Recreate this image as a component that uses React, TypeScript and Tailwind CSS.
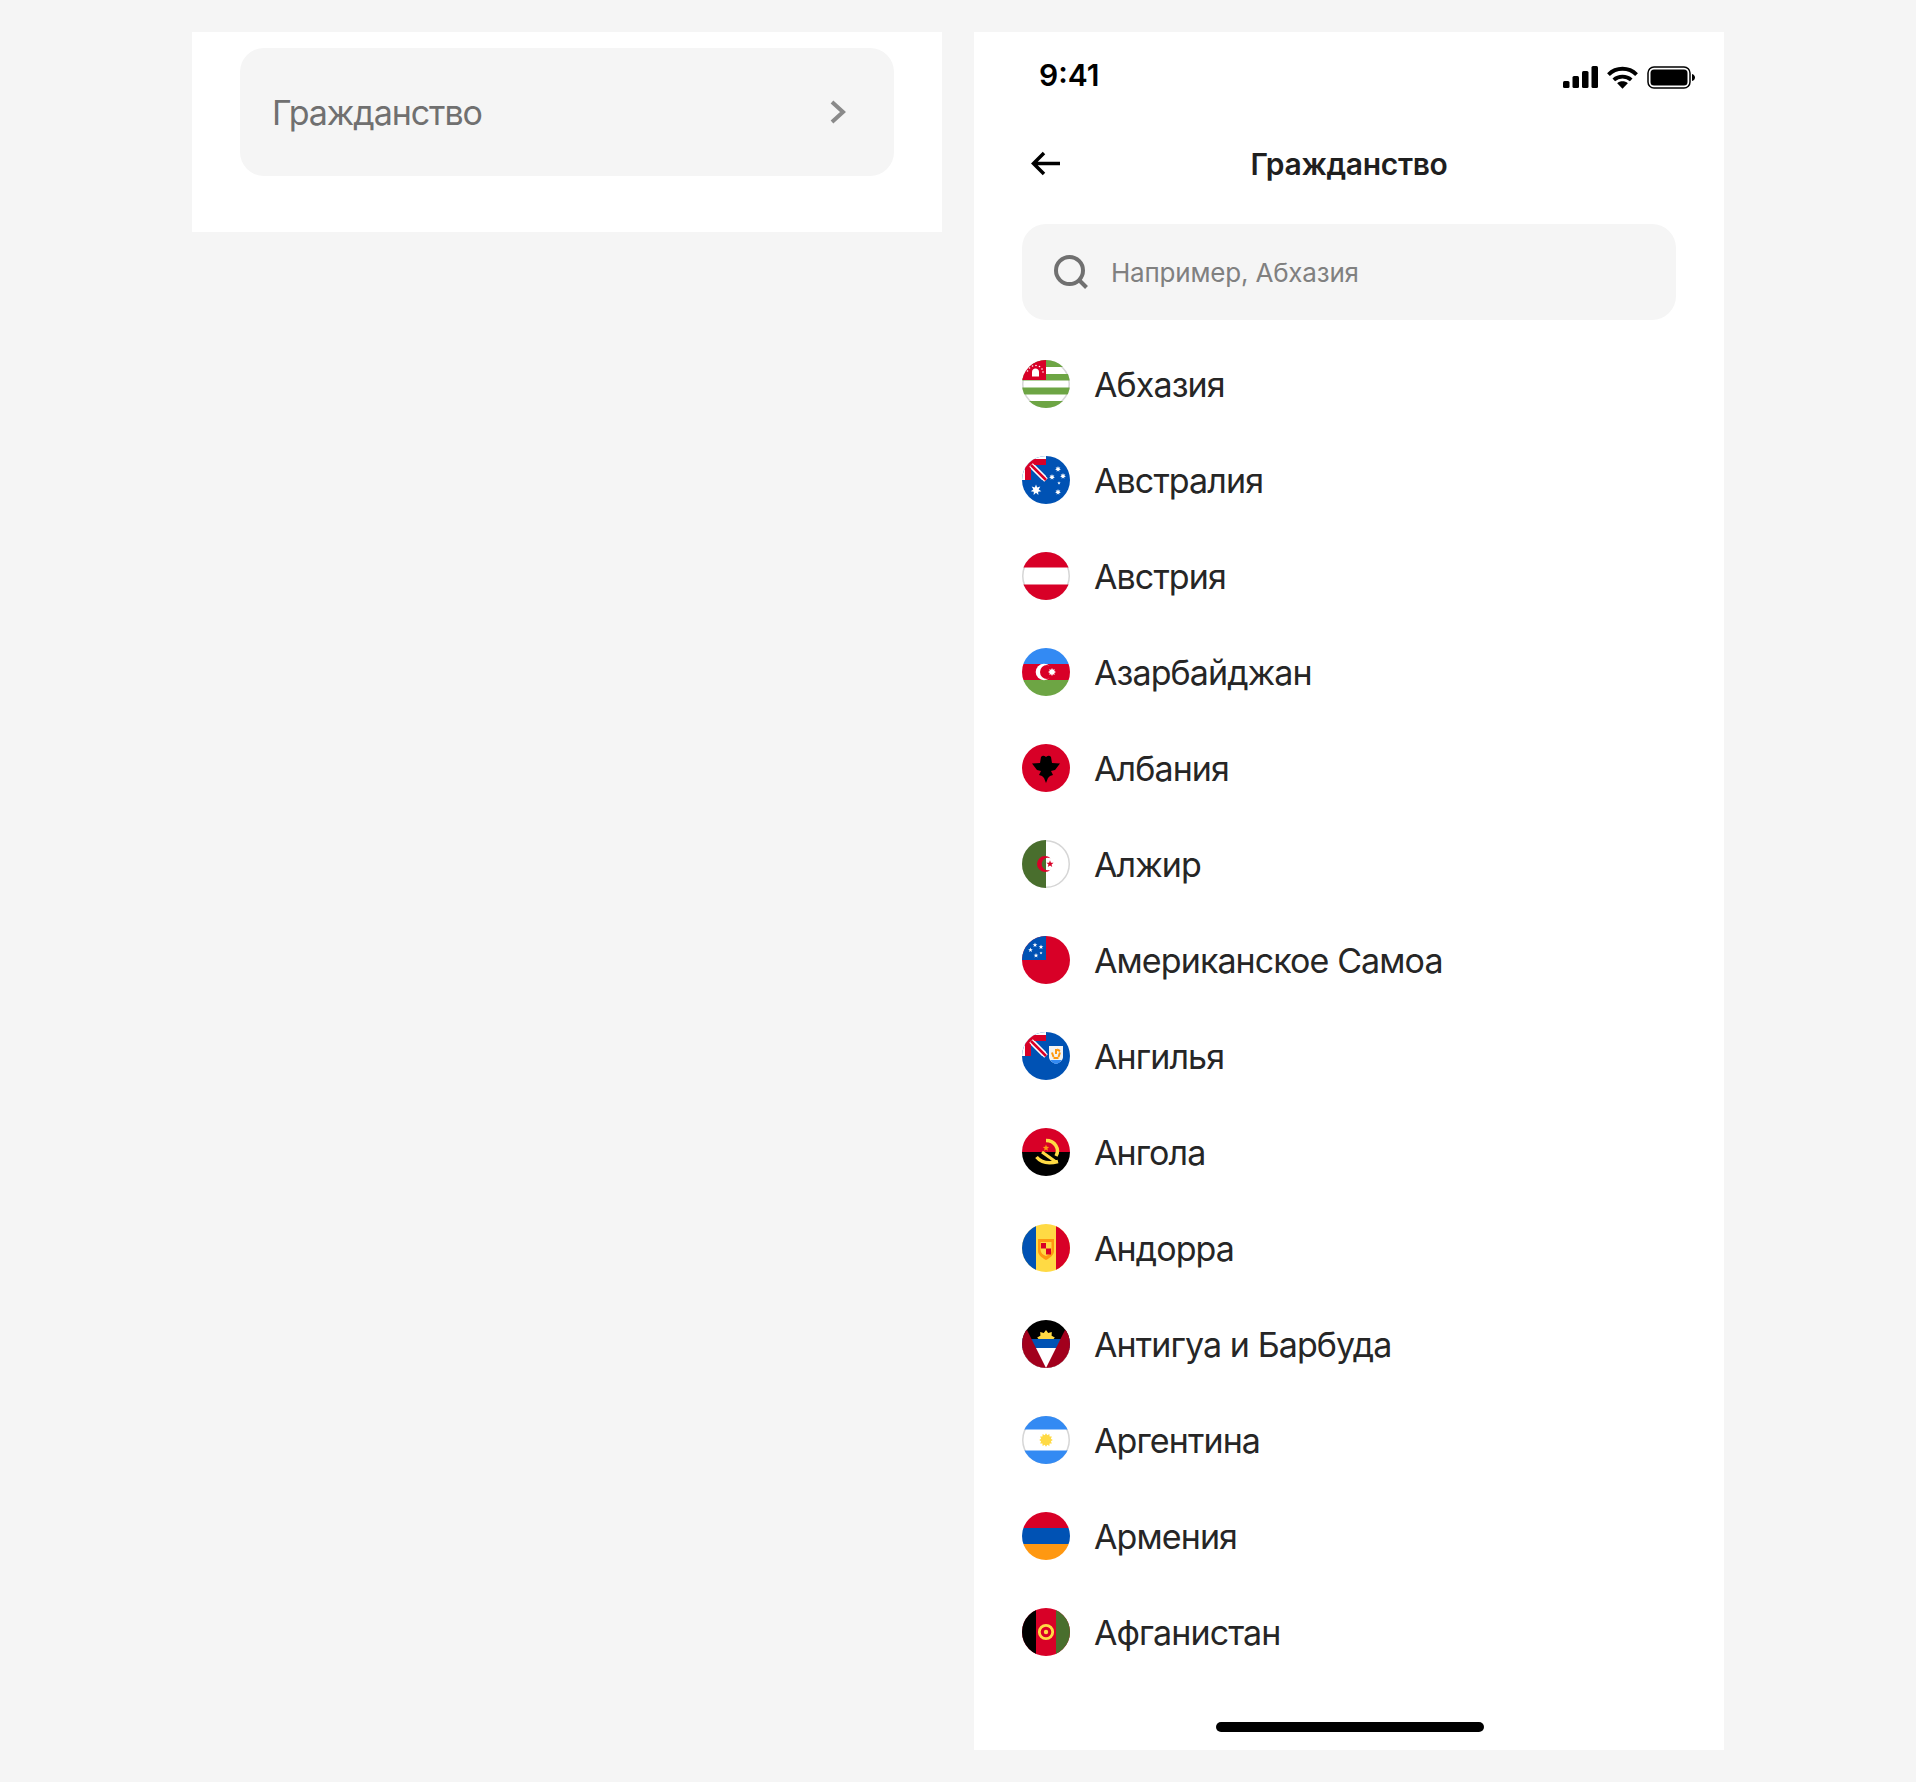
import React from "react";

const RED = "#d80027";
const GREEN = "#6da544";
const DARK_GREEN = "#496e2d";
const BLUE = "#0052b4";
const SKY = "#338af3";
const YELLOW = "#ffda44";
const ORANGE = "#ff9811";
const GREY = "#d6d6d6";

// круг с обрезкой, все флаги рисуются в координатах 0..48
const Flag = ({ id, children, light }: { id: string; children: React.ReactNode; light?: boolean }) => (
  <svg width="48" height="48" viewBox="0 0 48 48" className="shrink-0">
    <defs>
      <clipPath id={id}>
        <circle cx="24" cy="24" r="24" />
      </clipPath>
    </defs>
    {/* серая обводка видна только на белых частях флага */}
    {light && <circle cx="24" cy="24" r="23.25" fill="#fff" stroke={GREY} strokeWidth="1.5" />}
    <g clipPath={`url(#${id})`}>{children}</g>
  </svg>
);

const Star = ({ x, y, r, fill = "#fff", n = 5, inner = 0.42 }: { x: number; y: number; r: number; fill?: string; n?: number; inner?: number }) => {
  const pts: string[] = [];
  for (let i = 0; i < n * 2; i++) {
    const rad = i % 2 === 0 ? r : r * inner;
    const a = (Math.PI / n) * i - Math.PI / 2;
    pts.push(`${x + rad * Math.cos(a)},${y + rad * Math.sin(a)}`);
  }
  return <polygon points={pts.join(" ")} fill={fill} />;
};

const UnionCorner = () => (
  <>
    <rect width="48" height="48" fill={BLUE} />
    <rect width="24" height="24" fill="#fff" />
    <rect x="3" y="3" width="21" height="21" fill={RED} />
    <rect x="9" y="9" width="15" height="15" fill="#fff" />
    <path d="M9 13V24H20Z" fill={BLUE} />
    <path d="M13 9H24V20Z" fill={BLUE} />
    <path d="M9 9L24 24" stroke="#fff" strokeWidth="5" />
    <path d="M9 9L24 24" stroke={RED} strokeWidth="2.5" />
  </>
);

const flags: Record<string, React.ReactNode> = {
  abkhazia: (
    <Flag id="f-ab" light>
      <rect y="0" width="48" height="7" fill={GREEN} />
      <rect y="14" width="48" height="6.500" fill={GREEN} />
      <rect y="27.500" width="48" height="7" fill={GREEN} />
      <rect y="41" width="48" height="7" fill={GREEN} />
      <rect width="24" height="20" fill={RED} />
      <path d="M13.500 8.500c2 0 3.500 1.500 3.500 3.500v4.500h-7V12c0-2 1.500-3.500 3.500-3.500Z" fill="#fff" />
      <g fill="#fff">
        <circle cx="5.500" cy="11" r="0.800" />
        <circle cx="7.500" cy="8" r="0.800" />
        <circle cx="10.500" cy="6" r="0.800" />
        <circle cx="14" cy="5.500" r="0.800" />
        <circle cx="17.500" cy="6.500" r="0.800" />
        <circle cx="20" cy="9" r="0.800" />
        <circle cx="21" cy="12" r="0.800" />
      </g>
    </Flag>
  ),
  australia: (
    <Flag id="f-au">
      <UnionCorner />
      <Star x={14} y={34} r={5.500} n={7} inner={0.5} />
      <Star x={36} y={13} r={3} n={7} inner={0.5} />
      <Star x={30} y={21} r={3} n={7} inner={0.5} />
      <Star x={41} y={20} r={3} n={7} inner={0.5} />
      <Star x={37} y={27} r={1.800} />
      <Star x={36} y={36} r={3} n={7} inner={0.5} />
    </Flag>
  ),
  austria: (
    <Flag id="f-at" light>
      <rect width="48" height="15.500" fill={RED} />
      <rect y="32.500" width="48" height="15.500" fill={RED} />
    </Flag>
  ),
  azerbaijan: (
    <Flag id="f-az">
      <rect width="48" height="16" fill={SKY} />
      <rect y="16" width="48" height="16" fill={RED} />
      <rect y="32" width="48" height="16" fill={GREEN} />
      <circle cx="22" cy="24" r="8.300" fill="#fff" />
      <circle cx="25" cy="24" r="7" fill={RED} />
      <Star x={30} y={24} r={4} n={8} inner={0.6} />
    </Flag>
  ),
  albania: (
    <Flag id="f-al">
      <rect width="48" height="48" fill={RED} />
      <path d="M19 13Q21 10.500 24 13Q27 10.500 29 13L30 19L38 19.500L33 26L29 27L31 31L28 32L26 34L24 39L22 34L20 32L17 31L19 27L15 26L10 19.500L18 19Z" fill="#000" />
    </Flag>
  ),
  algeria: (
    <Flag id="f-dz" light>
      <rect width="24" height="48" fill={DARK_GREEN} />
      <path d="M28.550 18.240A8 8 0 1 0 28.550 29.760A6.300 6.300 0 1 1 28.550 18.240Z" fill={RED} />
      <Star x={28} y={24} r={3.800} fill={RED} />
    </Flag>
  ),
  samoa: (
    <Flag id="f-as">
      <rect width="48" height="48" fill={RED} />
      <path d="M0 0H24V24H0Z" fill={BLUE} />
      <Star x={13} y={9} r={2.500} />
      <Star x={19} y={11} r={2.500} />
      <Star x={8.500} y={14} r={2.500} />
      <Star x={19} y={17} r={1.600} />
      <Star x={14} y={19.500} r={2.500} />
    </Flag>
  ),
  anguilla: (
    <Flag id="f-ai">
      <UnionCorner />
      <path d="M27 14H41V25C41 28.500 37 31 34 32C31 31 27 28.500 27 25Z" fill="#f3f3f3" />
      <path d="M28.200 28H39.800C38 30.500 36 31.500 34 32C32 31.500 30 30.500 28.200 28Z" fill={SKY} />
      <g stroke={ORANGE} strokeWidth="2" fill="none">
        <path d="M34 17V22" />
        <path d="M30 20.500L31.500 25" />
        <path d="M38 20.500L36.500 25" />
        <path d="M31.500 26H36.500" />
        <path d="M35 17.500L38 19" />
      </g>
    </Flag>
  ),
  angola: (
    <Flag id="f-ao">
      <rect width="48" height="24" fill={RED} />
      <rect y="24" width="48" height="24" fill="#000" />
      <path d="M24 12.500C33 12.500 38 21 34 28" fill="none" stroke={YELLOW} strokeWidth="3.500" />
      <path d="M14.500 29C19 34.500 27 36 36 33.500" fill="none" stroke={YELLOW} strokeWidth="3.500" />
      <path d="M20 24L34 34" stroke={YELLOW} strokeWidth="3" />
      <Star x={24} y={20} r={3.400} fill={ORANGE} />
    </Flag>
  ),
  andorra: (
    <Flag id="f-ad">
      <rect width="48" height="48" fill={YELLOW} />
      <rect width="14" height="48" fill={BLUE} />
      <rect x="34" width="14" height="48" fill={RED} />
      <path d="M16 15H32V27C32 31 28 34 24 36C20 34 16 31 16 27Z" fill={ORANGE} />
      <path d="M18.500 18H29.500V26C29.500 29 27 31 24 32C21 31 18.500 29 18.500 26Z" fill={YELLOW} />
      <rect x="19" y="19" width="5" height="5.500" fill={RED} />
      <rect x="24" y="24.500" width="5" height="6" fill={RED} />
    </Flag>
  ),
  antigua: (
    <Flag id="f-ag">
      <rect width="48" height="48" fill="#000" />
      <Star x={24} y={19} r={9} n={9} inner={0.72} fill={YELLOW} />
      <rect y="19" width="48" height="29" fill="#fff" />
      <rect y="19" width="48" height="9" fill={BLUE} />
      <path d="M0 0L24 48H0Z" fill="#a2001d" />
      <path d="M48 0L24 48H48Z" fill="#a2001d" />
    </Flag>
  ),
  argentina: (
    <Flag id="f-ar" light>
      <rect width="48" height="13.500" fill={SKY} />
      <rect y="34.500" width="48" height="13.500" fill={SKY} />
      <Star x={24} y={24} r={6.800} n={12} inner={0.74} fill={YELLOW} />
    </Flag>
  ),
  armenia: (
    <Flag id="f-am">
      <rect width="48" height="16" fill={RED} />
      <rect y="16" width="48" height="16" fill={BLUE} />
      <rect y="32" width="48" height="16" fill={ORANGE} />
    </Flag>
  ),
  afghanistan: (
    <Flag id="f-af">
      <rect width="48" height="48" fill={RED} />
      <rect width="14" height="48" fill="#000" />
      <rect x="34" width="14" height="48" fill={DARK_GREEN} />
      <circle cx="24" cy="24" r="6.700" fill="none" stroke={YELLOW} strokeWidth="2.800" />
      <circle cx="24" cy="24" r="2.200" fill={YELLOW} />
    </Flag>
  ),
};

const countries: [string, string][] = [
  ["abkhazia", "Абхазия"],
  ["australia", "Австралия"],
  ["austria", "Австрия"],
  ["azerbaijan", "Азарбайджан"],
  ["albania", "Албания"],
  ["algeria", "Алжир"],
  ["samoa", "Американское Самоа"],
  ["anguilla", "Ангилья"],
  ["angola", "Ангола"],
  ["andorra", "Андорра"],
  ["antigua", "Антигуа и Барбуда"],
  ["argentina", "Аргентина"],
  ["armenia", "Армения"],
  ["afghanistan", "Афганистан"],
];

const App = () => {
  return (
    <div className="flex min-h-[1782px] items-start justify-center gap-8 bg-[#f5f5f5] pt-8 font-['Inter','Noto_Sans',sans-serif]">
      {/* закрытое поле */}
      <div className="h-[200px] w-[750px] bg-white px-12 pt-4">
        <div className="flex h-32 items-center justify-between rounded-3xl bg-[#f5f5f5] pl-8 pr-12">
          <span className="text-[34px] tracking-[-1.05px] text-[#707070]">Гражданство</span>
          <svg width="17" height="24" viewBox="0 0 17 24" fill="none">
            <path d="M3 2L14 12L3 22" stroke="#8a8a8a" strokeWidth="4" />
          </svg>
        </div>
      </div>

      {/* экран выбора */}
      <div className="flex h-[1718px] w-[750px] flex-col bg-white">
        <div className="flex h-[86px] shrink-0 items-center justify-between pl-[65px] pr-[29px]">
          <span className="text-[30px] font-semibold text-black">9:41</span>
          <div className="flex items-center gap-[9px] pt-1">
            <svg width="35" height="22" viewBox="0 0 35 22" fill="#000">
              <rect x="0" y="15" width="6.500" height="7" rx="1.500" />
              <rect x="9.500" y="10" width="6.500" height="12" rx="1.500" />
              <rect x="19" y="5" width="6.500" height="17" rx="1.500" />
              <rect x="28.500" y="0" width="6.500" height="22" rx="1.500" />
            </svg>
            <svg width="31" height="23" viewBox="0 0 32 23" fill="none" stroke="#000" strokeWidth="4">
              <path d="M1.500 8.500C9.500 .5 22.500 .5 30.500 8.500" />
              <path d="M7 14C12 9.500 20 9.500 25 14" />
              <path d="M16 23L10.500 17.500C13.500 14.800 18.500 14.800 21.500 17.500Z" fill="#000" stroke="none" />
            </svg>
            <svg width="48" height="23" viewBox="0 0 48 23" fill="none">
              <rect x="1" y="1" width="42" height="21" rx="6" stroke="#000" strokeWidth="1.500" />
              <rect x="3.500" y="3.500" width="37" height="16" rx="3.500" fill="#000" />
              <path d="M45 8C47 8.500 48 10 48 11.500S47 14.500 45 15Z" fill="#000" />
            </svg>
          </div>
        </div>

        <div className="relative flex h-[92px] shrink-0 items-center justify-center">
          <svg width="29" height="25" viewBox="0 0 29 25" fill="none" className="absolute left-[57px] top-[33px]">
            <path d="M13 2L2.500 12.500L13 23M3 12.500H29" stroke="#000" strokeWidth="3.500" />
          </svg>
          <span className="text-[30px] font-semibold tracking-[-0.33px] text-[#1f1f1f]">Гражданство</span>
        </div>

        <div className="mx-12 mt-3.5 flex h-24 shrink-0 items-center gap-[23px] rounded-3xl bg-[#f5f5f5] pl-8">
          <svg width="34" height="34" viewBox="0 0 34 34" fill="none" className="shrink-0">
            <circle cx="15.500" cy="15.500" r="13.500" stroke="#707070" strokeWidth="4" />
            <path d="M25 25L32.500 32.500" stroke="#707070" strokeWidth="4" />
          </svg>
          <span className="text-[26px] tracking-[-0.2px] text-[#808080]">Например, Абхазия</span>
        </div>

        <ul className="mt-4 flex flex-col">
          {countries.map(([key, name]) => (
            <li key={key} className="flex h-24 items-center gap-6 pl-12">
              {flags[key]}
              <span className="text-[34px] tracking-[-0.9px] text-[#262626]">{name}</span>
            </li>
          ))}
        </ul>

        <div className="mt-[42px] ml-[242px] h-2.5 w-[268px] rounded-full bg-black" />
      </div>
    </div>
  );
};

export default App;
